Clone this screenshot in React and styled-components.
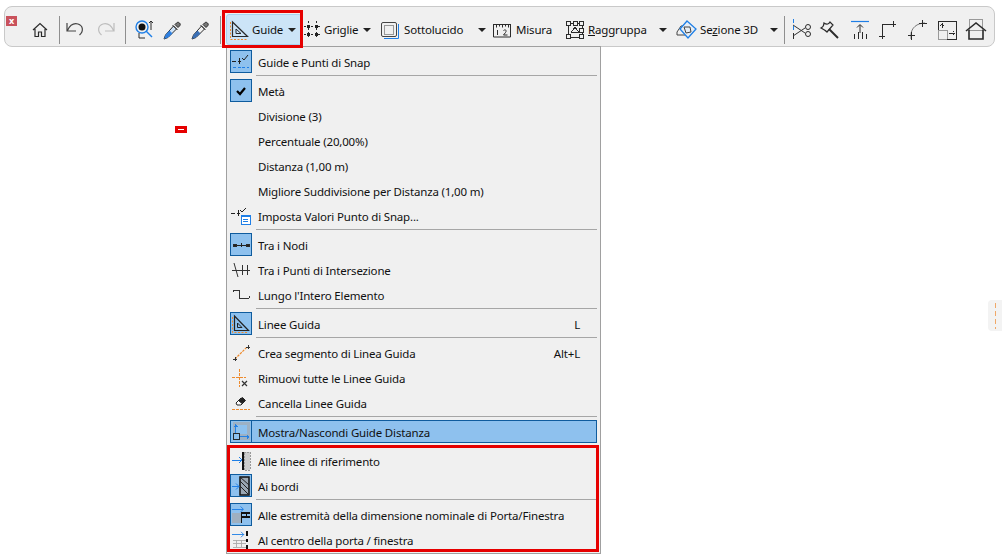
import React from "react";
import styled, { createGlobalStyle } from "styled-components";

const DARK = "#2b2b2b";
const BLUE = "#1f7fe6";
const ORANGE = "#ee8a2c";

const GlobalStyle = createGlobalStyle`
  html, body { margin: 0; padding: 0; background: #fff; }
  body {
    font-family: "Noto Sans", "Open Sans", sans-serif;
    font-size: 11.5px;
    letter-spacing: -0.17px;
    color: #111;
  }
`;

const Page = styled.div`
  position: relative;
  width: 1002px;
  height: 560px;
  overflow: hidden;
  padding: 6px 0 0 4px;
  box-sizing: border-box;
`;

const Toolbar = styled.div`
  display: flex;
  align-items: center;
  width: 991px;
  height: 41px;
  box-sizing: border-box;
  background: #f0f0f0;
  border: 1px solid #c9c9c9;
  border-radius: 8px;
  padding: 6px 0 0 21px;
`;

const CloseBadge = styled.div`
  position: absolute;
  left: 6px;
  top: 16px;
  width: 11px;
  height: 10px;
  background: #c9525c;
  color: #fff;
  font-size: 9px;
  font-weight: 700;
  line-height: 10px;
  text-align: center;
`;

const Divider = styled.div`
  width: 1px;
  height: 28px;
  background: #8f8f8f;
  margin-left: ${(p) => p.$ml || 0}px;
`;

const Tool = styled.div`
  flex: none;
  width: ${(p) => p.$w}px;
  margin-left: ${(p) => p.$ml || 0}px;
  height: 28px;
  display: flex;
  align-items: center;
  justify-content: center;
`;

const LabelTool = styled.div`
  flex: none;
  display: flex;
  align-items: center;
  height: 31px;
  box-sizing: border-box;
  width: ${(p) => p.$w}px;
  margin-left: ${(p) => p.$ml || 0}px;
  padding: 0 ${(p) => p.$pr || 0}px 0 ${(p) => p.$pl || 0}px;
  background: ${(p) => (p.$open ? "#cce4f7" : "transparent")};
  border: 1px solid ${(p) => (p.$open ? "#a9d2f0" : "transparent")};
  border-radius: ${(p) => (p.$open ? 3 : 0)}px;
`;

const ToolText = styled.span`
  margin-left: ${(p) => p.$ml}px;
  white-space: nowrap;
  color: #111;
`;

const Caret = styled.span`
  flex: none;
  width: 0;
  height: 0;
  margin-left: auto;
  border-left: 4px solid transparent;
  border-right: 4px solid transparent;
  border-top: 4px solid #222;
`;

const Key = styled.span`
  text-decoration: underline;
`;

const Menu = styled.div`
  position: absolute;
  left: 226px;
  top: 46px;
  width: 375px;
  height: 508px;
  box-sizing: border-box;
  background: #f0f0f0;
  border: 1px solid #a0a0a0;
  padding: 3px 3px 0 3px;
`;

const Row = styled.div`
  display: flex;
  height: ${(p) => (p.$selected ? 23 : 25)}px;
  margin-bottom: ${(p) => (p.$selected ? 2 : 0)}px;
  box-sizing: border-box;
  background: ${(p) => (p.$selected ? "#8ec1ee" : "transparent")};
  outline: ${(p) => (p.$selected ? "1px solid #0f5c9e" : "none")};
  outline-offset: -1px;
`;

const IconSlot = styled.div`
  flex: none;
  width: 22px;
  height: 23px;
  box-sizing: border-box;
  display: flex;
  align-items: center;
  justify-content: center;
  background: ${(p) => (p.$on ? "#8ec1ee" : "transparent")};
  border: 1px solid ${(p) => (p.$on ? "#0f5c9e" : "transparent")};
`;

const RowLabel = styled.span`
  flex: 1;
  margin-left: 6px;
  line-height: 26px;
  white-space: nowrap;
`;

const Shortcut = styled.span`
  line-height: 26px;
  margin-right: 17px;
`;

const Separator = styled.div`
  height: 1px;
  margin: 0 0 3px 26px;
  background: #a6a6a6;
`;

const RedFrame = styled.div`
  position: absolute;
  box-sizing: border-box;
  border: 3px solid #e60000;
  left: ${(p) => p.$x}px;
  top: ${(p) => p.$y}px;
  width: ${(p) => p.$w}px;
  height: ${(p) => p.$h}px;
  pointer-events: none;
`;

const Marker = styled.div`
  position: absolute;
  left: 175px;
  top: 126px;
  width: 12px;
  height: 7px;
  background: #e60000;
  display: flex;
  align-items: center;
  justify-content: center;
  &::after {
    content: "";
    width: 6px;
    height: 1px;
    background: #fff;
  }
`;

const SideHandle = styled.div`
  position: absolute;
  left: 988px;
  top: 300px;
  width: 14px;
  height: 31px;
  background: #f3f3f3;
  border-radius: 4px 0 0 4px;
  &::after {
    content: "";
    position: absolute;
    left: 7px;
    top: 3px;
    width: 1px;
    height: 26px;
    background: repeating-linear-gradient(#f0a868 0 5px, transparent 5px 8px);
  }
`;

const Svg = ({ s = 20, crisp, children }) => (
  <svg
    width={s}
    height={s}
    viewBox={`0 0 ${s} ${s}`}
    fill="none"
    stroke={DARK}
    strokeWidth="1"
    shapeRendering={crisp ? "crispEdges" : "auto"}
  >
    {children}
  </svg>
);

const HomeIcon = () => (
  <Svg s={18}>
    <path d="M2 9 9 2.5 16 9M4 8v7.5h3.5v-4.5h3v4.5H14V8" strokeWidth="1.2" />
  </Svg>
);
const UndoIcon = () => (
  <Svg s={22}>
    <path d="M3 4v8h9M3.5 11.5C6 6 10 4 14 5c5 1.5 6 7 1.5 11" stroke="#444" strokeWidth="1.2" />
  </Svg>
);
const RedoIcon = () => (
  <Svg s={22}>
    <path d="M19 4v8h-9M18.5 11.5C16 6 12 4 8 5c-5 1.5-6 7-1.5 11" stroke="#bdbdbd" strokeWidth="1.2" />
  </Svg>
);
const PickIcon = () => (
  <Svg s={24}>
    <circle cx="9" cy="9" r="6" stroke={BLUE} strokeWidth="1.4" />
    <circle cx="9" cy="9" r="3.5" fill="#111" stroke="none" />
    <path d="M13 13l6 6" stroke={BLUE} strokeWidth="1.4" />
    <path d="M18 3v9M16 5l2-2 2 2M6 15v5h6" />
  </Svg>
);
const DropperIcon = ({ fill, barrel }) => (
  <Svg s={22}>
    <path d="M12.5 7l3 3-8.500 8.500-4 1.500 1.500-4z" fill={barrel} stroke={DARK} />
    <path d="M8.500 11.500l3 3-4.500 4-4 1.500 1.500-4z" fill={fill} stroke="none" />
    <path d="M11.500 6l5 5M14 5.500l3 3 1.500-1.500c1-1 1-2 0-3s-2-1-3 0z" fill="#777" />
  </Svg>
);
const GuideIcon = () => (
  <Svg s={22}>
    <path d="M3.5 3v14.500h15z" stroke={DARK} strokeWidth="1.2" />
    <path d="M7 10v4.500h5z" stroke={DARK} />
    <path d="M1.5 3v17.500h17" stroke={ORANGE} strokeDasharray="2 1.5" />
  </Svg>
);
const GridIcon = () => (
  <Svg s={20} crisp>
    <path d="M5 1v18M13 1v18M1 6h18M1 14h18" strokeDasharray="2 1.5" />
    <g fill="#222" stroke="none">
      <rect x="4" y="5" width="3" height="3" />
      <rect x="12" y="5" width="3" height="3" />
      <rect x="4" y="13" width="3" height="3" />
      <rect x="12" y="13" width="3" height="3" />
    </g>
  </Svg>
);
const SheetIcon = () => (
  <Svg s={20}>
    <rect x="1.5" y="2.5" width="15" height="14" rx="1.5" stroke="#444" />
    <rect x="4.5" y="5.5" width="9" height="9" stroke="#999" />
    <path d="M18.5 4v14.500H4" stroke={BLUE} />
  </Svg>
);
const MeasureIcon = () => (
  <svg width="20" height="16" viewBox="0 0 20 16" fill="none" stroke={DARK}>
    <path d="M1.5 3v12h17V3M1 2.5h18M4.500 2.500v3M7.500 2.500v2M10.500 2.500v3M13.500 2.500v2M16.500 2.500v3" />
    <path d="M5.500 8v5M11.500 8.500c2-1.500 3.500 0 2 2l-2 2.500h4" />
  </svg>
);
const GroupIcon = () => (
  <Svg s={20} crisp>
    <rect x="3" y="3" width="14" height="14" />
    {[[1, 1], [14, 1], [1, 14], [14, 14], [8, 1], [14, 8]].map(([x, y]) => (
      <rect key={`${x}-${y}`} x={x} y={y} width="4" height="4" fill="#f0f0f0" />
    ))}
    <path d="M10 7l3.5 5h-7z" />
  </Svg>
);
const Section3dIcon = () => (
  <Svg s={22}>
    <path d="M1 13l4-6h8M1 13v3h9" stroke="#444" />
    <path d="M11 2l9 8-8 9-8-9z" stroke={BLUE} strokeWidth="1.3" fill="#e6eef6" />
    <path d="M8 8l6 0 1 5-5 1z" stroke="#444" />
  </Svg>
);
const ScissorIcon = () => (
  <Svg s={24}>
    <path d="M3.5 1v4M3.500 8v4" stroke={BLUE} />
    <path d="M3.500 15v6" />
    <path d="M3 7l12 8M3 18l12-8" stroke="#333" />
    <circle cx="18" cy="9" r="2.5" />
    <circle cx="18" cy="16" r="2.5" />
  </Svg>
);
const AxeIcon = () => (
  <Svg s={22}>
    <path d="M2 9c2-1 3-3 3-5 3 2 5 1 6-1l3 3-6 7c-2-2-4-3-6-4z" strokeWidth="1.2" />
    <path d="M10 10l9 9" strokeWidth="2" />
  </Svg>
);
const AlignUpIcon = () => (
  <Svg s={22}>
    <path d="M2 2.500h18" stroke={BLUE} strokeWidth="1.2" />
    <path d="M11 6v8M8 8.500 11 5.500l3 3" />
    <path d="M5.500 15v5M9.500 13v7M13.500 13v7M17.500 15v5" />
  </Svg>
);
const CornerIcon = () => (
  <Svg s={22} crisp>
    <path d="M4 20V5h14M1 17h6M15 2v6" />
  </Svg>
);
const CurveIcon = () => (
  <Svg s={22}>
    <path d="M4 20V16C4 9 10 4 18 4" stroke="#777" />
    <path d="M1 16.500h7M4.500 13v8M15.500 1v7M12 4.500h8" />
  </Svg>
);
const SplitIcon = () => (
  <Svg s={22} crisp>
    <rect x="2" y="11" width="9" height="9" stroke="#999" />
    <path d="M11 2H2v9M11 2h9v18h-9" />
    <path d="M6 9V4M13 14h6" />
    <path d="M4 6h1M7 6h1M5 5h1M6 5h1M17 12v1M17 15v1" />
  </Svg>
);
const RoofIcon = () => (
  <Svg s={24}>
    <rect x="5.5" y="1.5" width="13" height="11" stroke="#999" />
    <path d="M2 13 12 5l10 8M5 12v9h14v-9" strokeWidth="1.6" />
  </Svg>
);

const SnapIcon = ({ dashed }) => (
  <Svg s={20}>
    <g shapeRendering="crispEdges">
      <path d="M1 9h4M7 9h3M8 6v6" stroke="#222" />
      {dashed && <path d="M2 15h16" stroke={BLUE} strokeDasharray="3 1.5" />}
    </g>
    <path d="M11 6l2 2 4-5" stroke="#222" />
  </Svg>
);
const CheckIcon = () => (
  <svg width="12" height="10" viewBox="0 0 12 10" fill="none" stroke="#000" strokeWidth="2.2">
    <path d="M2 5l3 3 5-6" />
  </svg>
);
const SnapValuesIcon = () => (
  <Svg s={20}>
    <path d="M9 4l2 2 4-4" stroke="#222" />
    <g shapeRendering="crispEdges">
      <path d="M0 7h4M6 7h3M7 4v6" stroke="#222" />
      <rect x="10" y="9" width="9" height="9" fill="#fff" stroke={BLUE} />
      <path d="M10 10h9" stroke={BLUE} strokeWidth="2" />
      <path d="M12 13h5M12 15h5" stroke={BLUE} />
    </g>
  </Svg>
);
const NodesIcon = () => (
  <Svg s={20} crisp>
    <path d="M3 10h14M10 8v4" stroke="#222" />
    <rect x="2" y="9" width="3" height="2" fill="#222" />
    <rect x="15" y="9" width="3" height="2" fill="#222" />
  </Svg>
);
const IntersectIcon = () => (
  <Svg s={20}>
    <path d="M1 10.500h18M11.500 5v10M16.500 5v10" stroke="#333" />
    <path d="M3 3l4 14" stroke="#333" />
  </Svg>
);
const WholeIcon = () => (
  <Svg s={20} crisp>
    <path d="M2 5h6v8h10M2 5v2M18 11v2" stroke="#333" />
  </Svg>
);
const GuideLineIcon = () => (
  <Svg s={20}>
    <path d="M3.5 2v14.500h14z" stroke="#222" strokeWidth="1.2" />
    <path d="M6.500 9v4.500h4.500z" stroke="#222" />
    <path d="M1.5 3v15.500h16" stroke={ORANGE} strokeDasharray="2 1.5" />
  </Svg>
);
const SegmentIcon = () => (
  <Svg s={20}>
    <path d="M4 16 16 4" stroke={ORANGE} strokeWidth="1.2" strokeDasharray="2.5 1" />
    <g shapeRendering="crispEdges">
      <path d="M2 16h4M4 14v4M15 4h4M17 2v4" stroke="#333" />
    </g>
  </Svg>
);
const RemoveIcon = () => (
  <Svg s={20}>
    <g shapeRendering="crispEdges">
      <path d="M8 1v18M1 9h14" stroke={ORANGE} strokeDasharray="2.500 1.500" />
    </g>
    <path d="M11 13l5 5M16 13l-5 5" stroke="#333" strokeWidth="1.2" />
  </Svg>
);
const EraserIcon = () => (
  <Svg s={20}>
    <path d="M5 10l5-5 4 3-4 4H6z" fill="#fff" stroke="#222" />
    <path d="M7.500 7.500l4-3 3 3-3.500 3z" fill="#222" stroke="#222" />
    <g shapeRendering="crispEdges">
      <path d="M1 16h18" stroke={ORANGE} strokeDasharray="2.500 1.500" />
    </g>
  </Svg>
);
const DistanceIcon = () => (
  <Svg s={21} crisp>
    <rect x="2" y="1" width="18" height="18" fill="#9db1c4" stroke="none" />
    <rect x="5" y="4" width="12" height="9" fill="#8ec1ee" stroke="none" />
    <rect x="3" y="13" width="6" height="6" fill="#8ec1ee" stroke="#222" />
    <path d="M5 12V3M4 4h2M3 5h4M9 16h10M17 14v4M18 15v2" stroke={BLUE} />
  </Svg>
);
const RefLineIcon = () => (
  <Svg s={20}>
    <g shapeRendering="crispEdges">
      <rect x="13" y="1" width="6" height="18" fill="#ccc" stroke="#999" strokeDasharray="2 1" />
      <path d="M12 1v18" stroke="#111" strokeWidth="2" />
      <path d="M1 9h10" stroke={BLUE} />
    </g>
    <path d="M8 6l3 3-3 3" stroke={BLUE} />
  </Svg>
);
const EdgeIcon = () => (
  <Svg s={20}>
    <rect x="9" y="1" width="9" height="18" fill="#9aa7b3" stroke="#111" strokeWidth="1.5" />
    <path d="M9 5l9 9M9 10l9 9M9 1l9 8" stroke="#222" />
    <path d="M1 10.500h7M5 7.500l3 3-3 3" stroke={BLUE} />
  </Svg>
);
const DoorEndIcon = () => (
  <Svg s={21}>
    <g shapeRendering="crispEdges">
      <rect x="1" y="9" width="10" height="10" fill="#9fb0c0" stroke="none" />
      <path d="M11 19V9h9M11 13h9M16 9v4" stroke="#111" strokeWidth="1.5" />
      <path d="M1 5h12" stroke={BLUE} />
    </g>
    <path d="M10 2l3 3-3 3" stroke={BLUE} />
  </Svg>
);
const DoorCenterIcon = () => (
  <Svg s={22}>
    <g shapeRendering="crispEdges">
      <path d="M1 5h13" stroke={BLUE} />
      <path d="M18 1v6M18 10v3M18 16v5" stroke="#111" strokeWidth="2" />
      <path d="M2 11h14M2 15h14M2 19h14M6 11v8M11 11v8" stroke="#aaa" />
    </g>
    <path d="M11 2l3 3-3 3" stroke={BLUE} />
  </Svg>
);

const items = [
  { icon: <SnapIcon dashed />, on: true, label: "Guide e Punti di Snap" },
  "sep",
  { icon: <CheckIcon />, on: true, label: "Metà" },
  { label: "Divisione (3)" },
  { label: "Percentuale (20,00%)" },
  { label: "Distanza (1,00 m)" },
  { label: "Migliore Suddivisione per Distanza (1,00 m)" },
  { icon: <SnapValuesIcon />, label: "Imposta Valori Punto di Snap..." },
  "sep",
  { icon: <NodesIcon />, on: true, label: "Tra i Nodi" },
  { icon: <IntersectIcon />, label: "Tra i Punti di Intersezione" },
  { icon: <WholeIcon />, label: "Lungo l'Intero Elemento" },
  "sep",
  { icon: <GuideLineIcon />, on: true, label: "Linee Guida", key: "L" },
  "sep",
  { icon: <SegmentIcon />, label: "Crea segmento di Linea Guida", key: "Alt+L" },
  { icon: <RemoveIcon />, label: "Rimuovi tutte le Linee Guida" },
  { icon: <EraserIcon />, label: "Cancella Linee Guida" },
  "sep",
  { icon: <DistanceIcon />, on: true, selected: true, label: "Mostra/Nascondi Guide Distanza" },
  "sep",
  { icon: <RefLineIcon />, label: "Alle linee di riferimento" },
  { icon: <EdgeIcon />, on: true, label: "Ai bordi" },
  "sep",
  { icon: <DoorEndIcon />, on: true, label: "Alle estremità della dimensione nominale di Porta/Finestra" },
  { icon: <DoorCenterIcon />, label: "Al centro della porta / finestra" },
];

export default function App() {
  return (
    <Page>
      <GlobalStyle />
      <Toolbar>
        <Tool $w={28}><HomeIcon /></Tool>
        <Divider $ml={5} />
        <Tool $w={30}><UndoIcon /></Tool>
        <Tool $w={32}><RedoIcon /></Tool>
        <Divider $ml={3} />
        <Tool $w={28} $ml={5}><PickIcon /></Tool>
        <Tool $w={26}><DropperIcon fill="#2f80e0" barrel="#cfe3f7" /></Tool>
        <Tool $w={28} $ml={1}><DropperIcon fill="#3a6fb5" barrel="#f0f0f0" /></Tool>
        <Divider $ml={6} />
        <LabelTool $open $w={76} $ml={5} $pl={2} $pr={5}>
          <GuideIcon />
          <ToolText $ml={1}>Guide</ToolText>
          <Caret />
        </LabelTool>
        <LabelTool $w={73} $pr={3}>
          <GridIcon />
          <ToolText $ml={1}>Griglie</ToolText>
          <Caret />
        </LabelTool>
        <LabelTool $w={110} $ml={4} $pr={2}>
          <SheetIcon />
          <ToolText $ml={4}>Sottolucido</ToolText>
          <Caret />
        </LabelTool>
        <LabelTool $w={66} $ml={2}>
          <MeasureIcon />
          <ToolText $ml={4}>Misura</ToolText>
        </LabelTool>
        <LabelTool $w={106} $ml={7} $pr={2}>
          <GroupIcon />
          <ToolText $ml={3}><Key>R</Key>aggruppa</ToolText>
          <Caret />
        </LabelTool>
        <LabelTool $w={106} $ml={5} $pr={2}>
          <Section3dIcon />
          <ToolText $ml={2}>Se<Key>z</Key>ione 3D</ToolText>
          <Caret />
        </LabelTool>
        <Divider $ml={3} />
        <Tool $w={24} $ml={5}><ScissorIcon /></Tool>
        <Tool $w={24} $ml={4}><AxeIcon /></Tool>
        <Tool $w={24} $ml={6}><AlignUpIcon /></Tool>
        <Tool $w={24} $ml={5}><CornerIcon /></Tool>
        <Tool $w={24} $ml={5}><CurveIcon /></Tool>
        <Tool $w={24} $ml={5}><SplitIcon /></Tool>
        <Tool $w={24} $ml={5}><RoofIcon /></Tool>
      </Toolbar>
      <CloseBadge>x</CloseBadge>

      <Menu>
        {items.map((item, i) =>
          item === "sep" ? (
            <Separator key={i} />
          ) : (
            <Row key={i} $selected={item.selected}>
              <IconSlot $on={item.on}>{item.icon}</IconSlot>
              <RowLabel>{item.label}</RowLabel>
              {item.key && <Shortcut>{item.key}</Shortcut>}
            </Row>
          )
        )}
      </Menu>

      <RedFrame $x={222} $y={10} $w={81} $h={38} />
      <RedFrame $x={227} $y={445} $w={372} $h={107} />
      <Marker />
      <SideHandle />
    </Page>
  );
}
